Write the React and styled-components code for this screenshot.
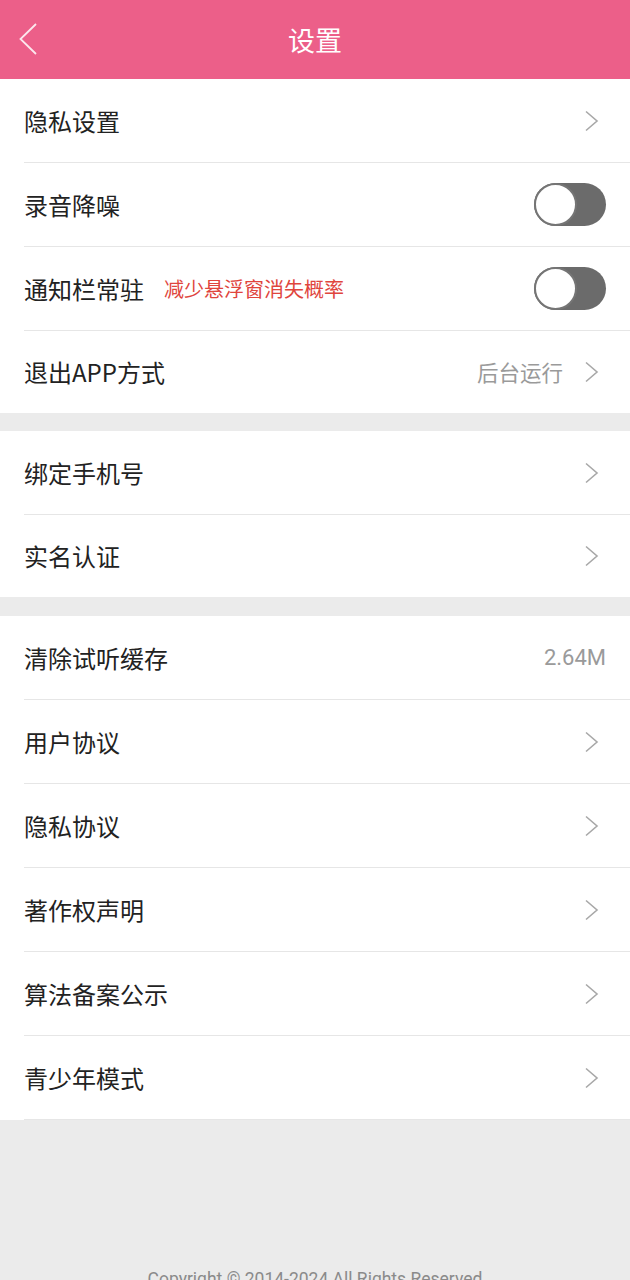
import React from "react";
import styled, { createGlobalStyle } from "styled-components";

const GlobalStyle = createGlobalStyle`
  html, body {
    margin: 0;
    padding: 0;
    background: #ebebeb;
  }
  body {
    font-family: "Noto Sans CJK SC", "Noto Sans", sans-serif;
  }
`;

const Page = styled.div`
  width: 630px;
  min-height: 1280px;
  background: #ebebeb;
  display: flex;
  flex-direction: column;
`;

const Header = styled.header`
  height: 79px;
  background: #ec5f89;
  display: flex;
  align-items: center;
  justify-content: center;
  position: relative;
`;

const BackButton = styled.div`
  position: absolute;
  left: 18px;
  top: 22px;
  width: 22px;
  height: 34px;
  display: flex;
`;

const Title = styled.h1`
  margin: 0;
  color: #fff;
  font-size: 27px;
  font-weight: 400;
  line-height: 1;
`;

const Group = styled.section`
  background: #fff;
  display: flex;
  flex-direction: column;
  margin-bottom: ${(p) => p.$gap || 0}px;
`;

const Row = styled.div`
  height: ${(p) => (p.$divider ? 84 : 82)}px;
  box-sizing: border-box;
  margin-left: 24px;
  padding-right: 24px;
  display: flex;
  align-items: center;
  border-bottom: ${(p) => (p.$divider ? "1px solid #e6e6e6" : "none")};
`;

const Label = styled.span`
  font-size: 24px;
  color: #222;
  line-height: 1;
`;

const Hint = styled.span`
  margin-left: 20px;
  font-size: 20px;
  color: #e0453d;
  line-height: 1;
`;

const Spacer = styled.div`
  flex: 1;
`;

const Value = styled.span`
  font-size: ${(p) => (p.$latin ? 22 : 21.5)}px;
  color: #9a9a9a;
  line-height: 1;
  font-family: ${(p) =>
    p.$latin ? '"Roboto", "Noto Sans", sans-serif' : "inherit"};
  margin-right: ${(p) => (p.$withArrow ? 19 : 0)}px;
`;

const Toggle = styled.div`
  width: 72px;
  height: 43px;
  border-radius: 22px;
  background: #6b6b6b;
  display: flex;
  align-items: center;
`;

const Knob = styled.div`
  width: 43px;
  height: 43px;
  box-sizing: border-box;
  border-radius: 50%;
  background: #fff;
  border: 2px solid #757575;
`;

const Footer = styled.footer`
  flex: 1;
  display: flex;
  justify-content: center;
  padding-top: 151px;
`;

const Copyright = styled.span`
  font-family: "Roboto", "Noto Sans", sans-serif;
  font-size: 17.5px;
  color: #8a8a8a;
  line-height: 1;
`;

const Chevron = () => (
  <svg width="24" height="24" viewBox="0 0 24 24">
    <polyline
      points="4,2.5 15,12 4,21.5"
      fill="none"
      stroke="#a8a8a8"
      strokeWidth="1.6"
    />
  </svg>
);

const BackIcon = () => (
  <svg width="22" height="34" viewBox="0 0 22 34">
    <polyline
      points="18,2 2.5,17 18,32"
      fill="none"
      stroke="rgba(255,255,255,0.85)"
      strokeWidth="1.8"
    />
  </svg>
);

const Switch = () => (
  <Toggle>
    <Knob />
  </Toggle>
);

const groups = [
  {
    gap: 18,
    rows: [
      { label: "隐私设置", arrow: true },
      { label: "录音降噪", toggle: true },
      { label: "通知栏常驻", hint: "减少悬浮窗消失概率", toggle: true },
      { label: "退出APP方式", value: "后台运行", arrow: true },
    ],
  },
  {
    gap: 19,
    rows: [
      { label: "绑定手机号", arrow: true },
      { label: "实名认证", arrow: true },
    ],
  },
  {
    gap: 0,
    lastDivider: true,
    rows: [
      { label: "清除试听缓存", value: "2.64M", latin: true },
      { label: "用户协议", arrow: true },
      { label: "隐私协议", arrow: true },
      { label: "著作权声明", arrow: true },
      { label: "算法备案公示", arrow: true },
      { label: "青少年模式", arrow: true },
    ],
  },
];

export default function App() {
  return (
    <Page>
      <GlobalStyle />
      <Header>
        <BackButton>
          <BackIcon />
        </BackButton>
        <Title>设置</Title>
      </Header>

      {groups.map((g, gi) => (
        <Group key={gi} $gap={g.gap}>
          {g.rows.map((r, i) => (
            <Row
              key={r.label}
              $divider={i < g.rows.length - 1 || g.lastDivider}
            >
              <Label>{r.label}</Label>
              {r.hint && <Hint>{r.hint}</Hint>}
              <Spacer />
              {r.value && (
                <Value $latin={r.latin} $withArrow={r.arrow}>
                  {r.value}
                </Value>
              )}
              {r.arrow && <Chevron />}
              {r.toggle && <Switch />}
            </Row>
          ))}
        </Group>
      ))}

      <Footer>
        <Copyright>Copyright © 2014-2024 All Rights Reserved</Copyright>
      </Footer>
    </Page>
  );
}
